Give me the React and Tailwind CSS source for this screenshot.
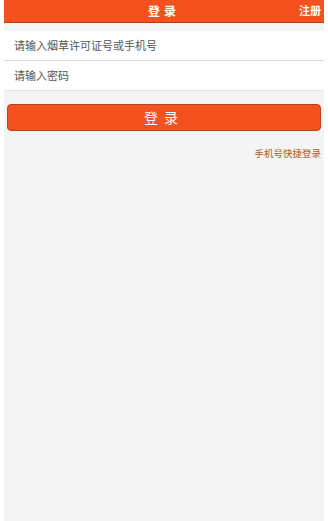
export default function App() {
  return (
    <div className="min-h-[521px] bg-white px-[4px] font-['Noto_Sans_CJK_SC',sans-serif]">
      <div className="flex min-h-[521px] flex-col bg-[#f4f4f4]">
        <div className="relative flex h-[23px] items-center justify-center border-b border-[#a8421c] bg-[#f4511e]">
          <span className="text-[12px] font-bold tracking-[4px] text-white">登录</span>
          <span className="absolute right-[3px] top-[2px] text-[11px] font-bold text-white">注册</span>
        </div>
        <div className="mt-[8px] bg-white">
          <div className="flex h-[30px] items-center border-b border-[#d8d8d8] pl-[10px] text-[11px] text-[#555]">
            请输入烟草许可证号或手机号
          </div>
          <div className="flex h-[30px] items-center border-b border-[#e4e4e4] pl-[10px] text-[11px] text-[#555]">
            请输入密码
          </div>
        </div>
        <div className="px-[3px] pt-[13px]">
          <button className="flex h-[27px] w-full items-center justify-center rounded-[4px] border border-[#b4461c] bg-[#f4511e] text-[14px] tracking-[6px] text-white">
            登录
          </button>
        </div>
        <div className="flex justify-end pr-[3px] pt-[15px] text-[9.5px] text-[#b35a1c]">
          手机号快捷登录
        </div>
      </div>
    </div>
  );
}
